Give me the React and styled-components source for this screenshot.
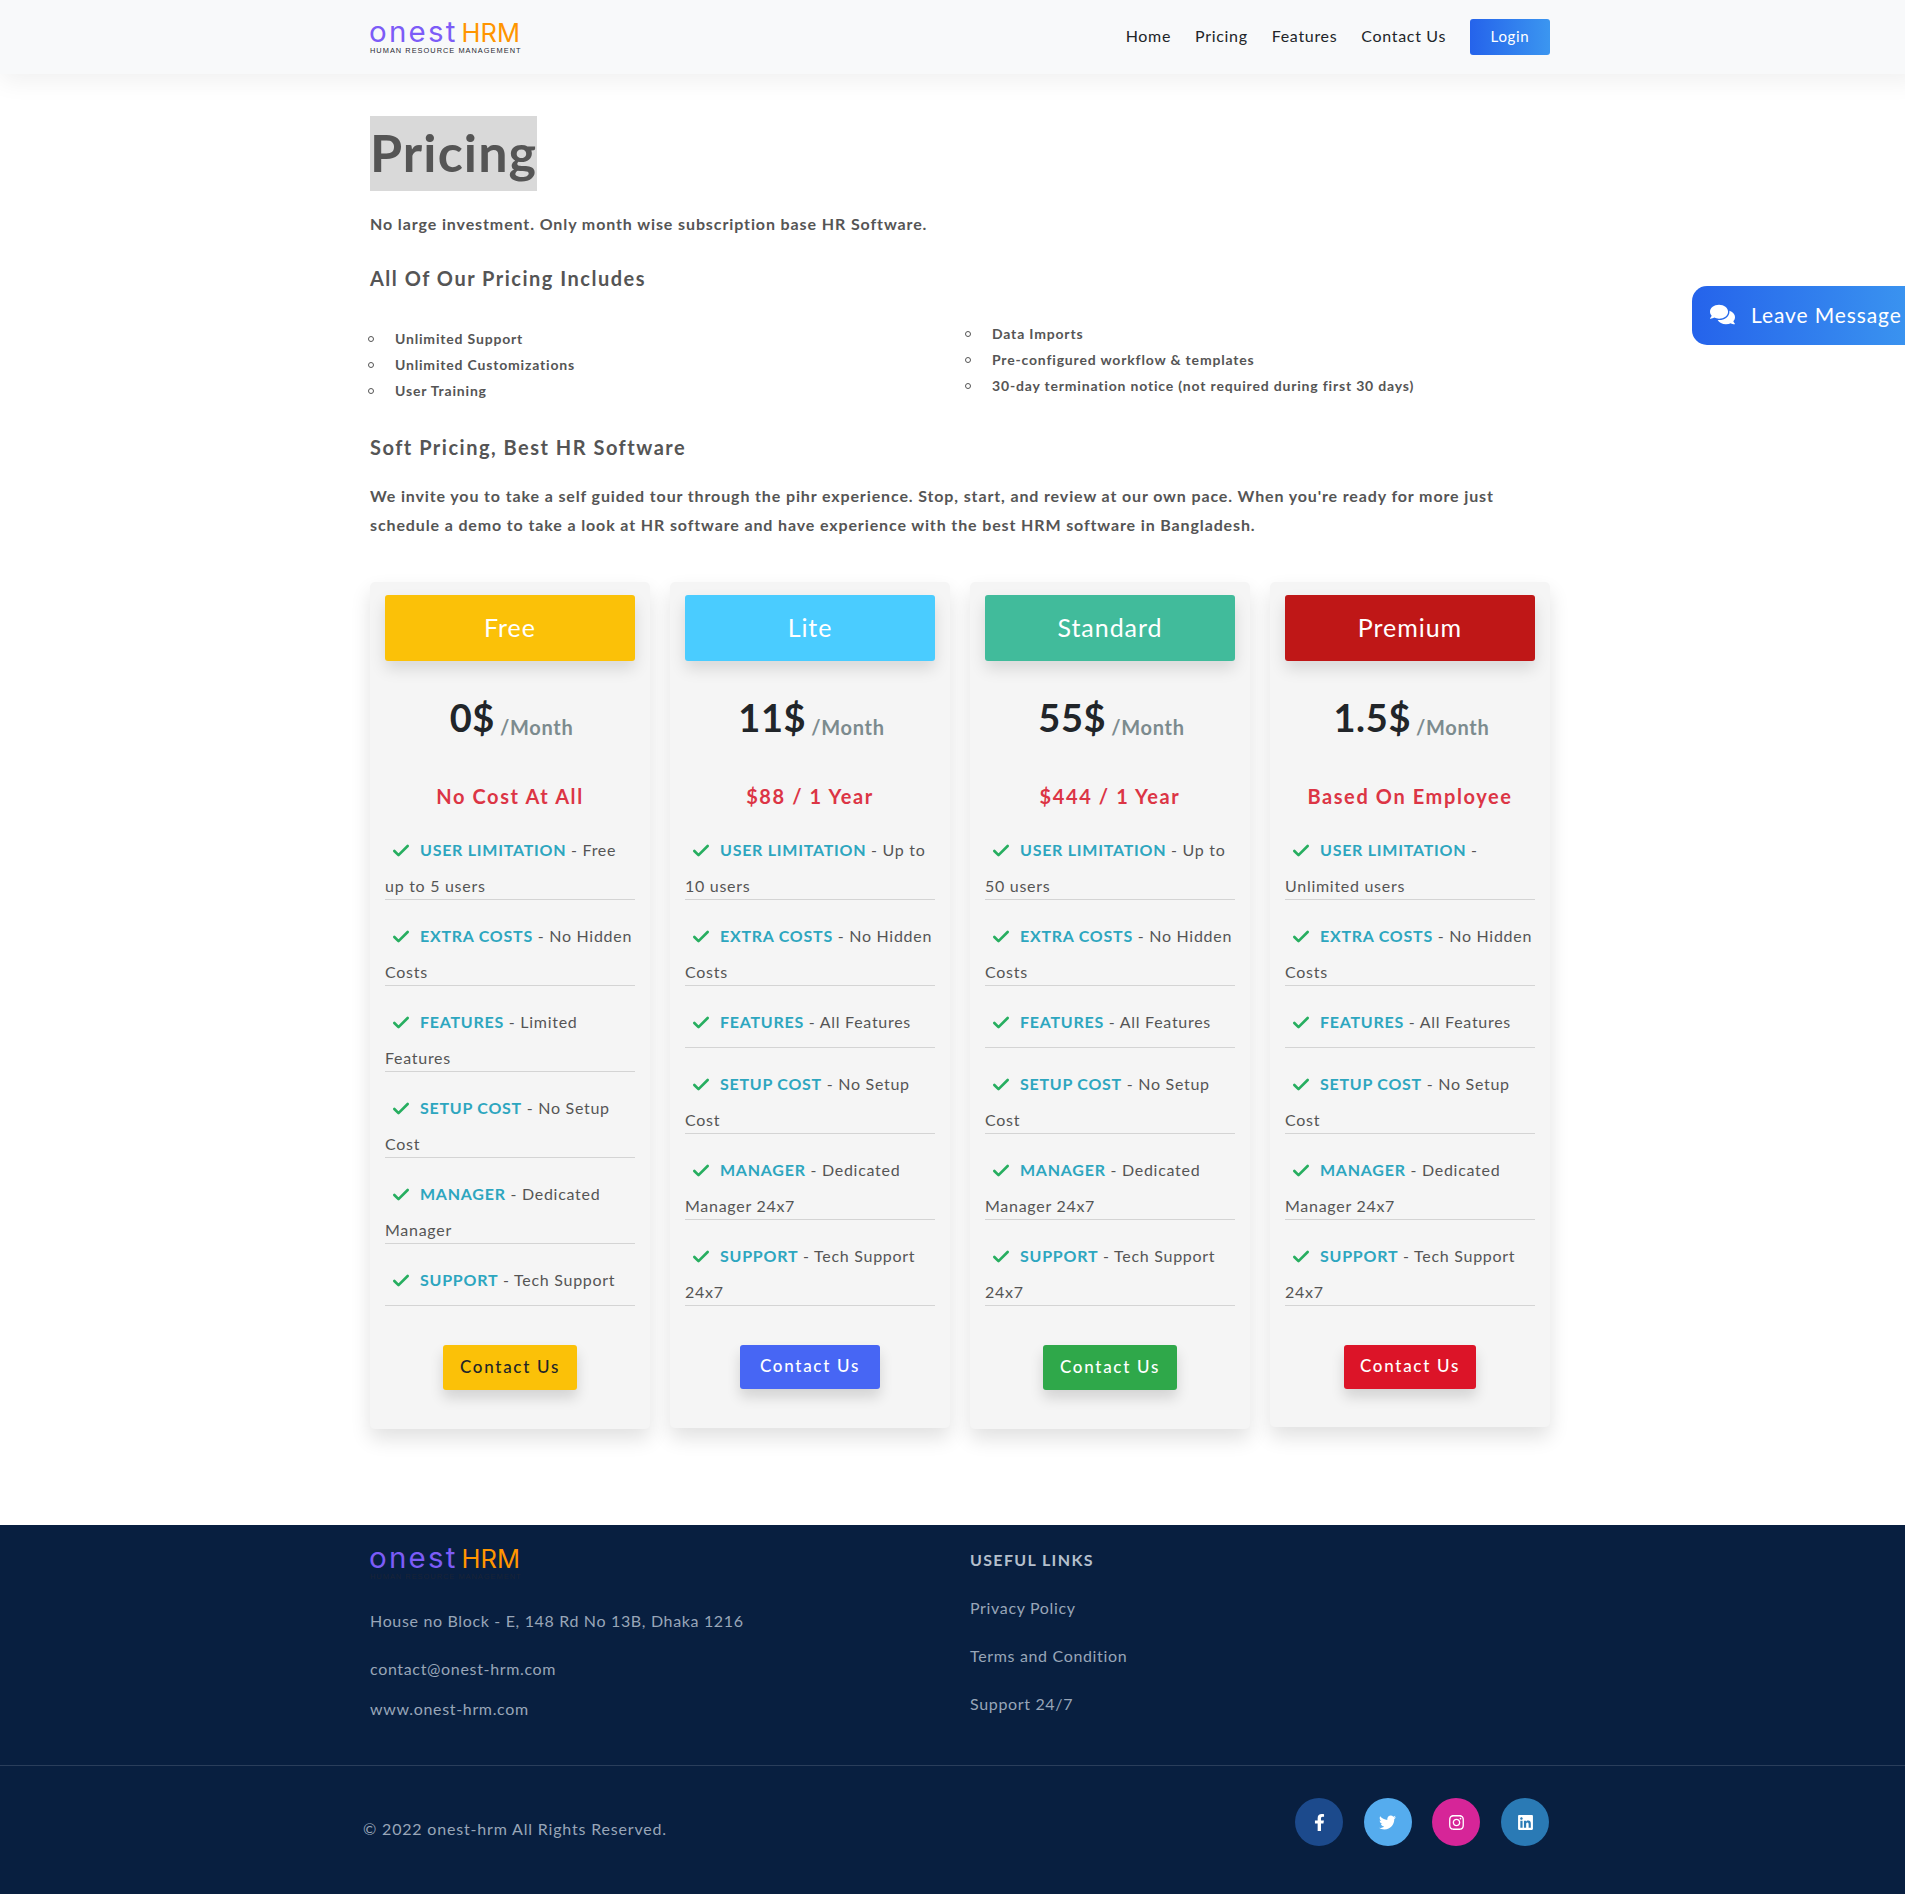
import React from "react";
import styled, { createGlobalStyle } from "styled-components";
import { FaComments, FaFacebookF, FaTwitter, FaInstagram, FaLinkedin } from "react-icons/fa";
import { Check } from "lucide-react";

const Global = createGlobalStyle`
  html, body { margin: 0; padding: 0; overflow-x: hidden; background: #fff; }
  body { font-family: "Lato", "Noto Sans", sans-serif; color: #555; }
  #root { width: 1920px; position: relative; }
  * { box-sizing: border-box; }
`;

const Header = styled.header`
  height: 74px; background: #f8f9fa; box-shadow: 0 8px 24px rgba(0,0,0,.06);
`;
const Container = styled.div`
  width: 1180px; margin: 0 auto;
`;
const HeaderRow = styled(Container)`
  height: 74px; display: flex; align-items: flex-start; justify-content: space-between;
`;
const LogoBox = styled.div`
  width: 152px; margin-top: ${p => p.$top}px; display: flex; flex-direction: column;
`;
const LogoWord = styled.div`
  font-family: "Inter", sans-serif; line-height: 26px; height: 26px; font-weight: 400;
  white-space: nowrap; display: flex; align-items: baseline;
`;
const LogoOnest = styled.span` color: #7c5cf7; font-size: 29.5px; letter-spacing: 2.2px; margin-left: -1px; `;
const LogoHrm = styled.span` color: #ff9500; font-size: 25.5px; margin-left: 4px; letter-spacing: 0; `;
const LogoTag = styled.div`
  font-family: "Liberation Sans", sans-serif; font-size: 7.4px; line-height: 9px; letter-spacing: 1.02px; margin-top: 2px; white-space: nowrap;
  color: ${p => p.$color};
`;
const Nav = styled.nav`
  display: flex; align-items: center; margin-top: 19px; height: 36px;
`;
const NavLink = styled.a`
  font-size: 16px; font-weight: 400; color: #212529; margin-right: 24px; letter-spacing: .68px; line-height: 34px; height: 36px;
`;
const LoginBtn = styled.a`
  width: 80px; height: 36px; border-radius: 3px; background: linear-gradient(90deg,#2563eb,#3b96f0);
  color: #fff; font-size: 15px; text-align: center; line-height: 35px; letter-spacing: .7px;
`;
const Main = styled(Container)`
  padding: 42px 0 96px;
`;
const Title = styled.h1`
  display: inline-block; margin: 0; height: 75px; background: #d9d9d9; color: #555;
  font-size: 52px; line-height: 72px; font-weight: 700; letter-spacing: 1.1px; vertical-align: top;
`;
const Lead = styled.p`
  margin: ${p => p.$top}px 0 0; font-size: 16px; font-weight: 700; line-height: ${p => p.$lh}px; letter-spacing: ${p => p.$ls}px; color: #555;
`;
const SubHead = styled.h2`
  margin: ${p => p.$top}px 0 0; font-size: 20px; font-weight: 700; line-height: 28px; letter-spacing: 1.5px; color: #555;
`;
const Lists = styled.div`
  display: grid; grid-template-columns: 597px 1fr; margin-left: -2px; align-items: start;
`;
const IncludeList = styled.ul`
  list-style: none; margin: ${p => p.$top}px 0 0; padding: 0;
`;
const IncludeItem = styled.li`
  display: flex; align-items: center; gap: 21px; height: 26px; font-size: 14px; font-weight: 700; letter-spacing: .82px; color: #555;
`;
const Marker = styled.span`
  width: 6px; height: 6px; margin-top: 1px; border-radius: 50%; border: 1px solid #555; flex: none;
`;
const Cards = styled.div`
  display: grid; grid-template-columns: repeat(4, 280px); gap: 20px; margin-top: 43px; align-items: start;
`;
const Card = styled.article`
  background: #f5f5f5; border-radius: 5px; padding: 13px 15px ${p => p.$pb}px;
  box-shadow: 0 10px 20px rgba(0,0,0,.12); display: flex; flex-direction: column;
`;
const CardTitle = styled.div`
  height: 66px; border-radius: 3px; background: ${p => p.$bg}; color: #fff; text-align: center;
  font-size: 25px; line-height: 64px; letter-spacing: .95px; box-shadow: 0 8px 16px rgba(0,0,0,.12);
`;
const Price = styled.div`
  margin-top: 34px; padding-left: 3px; text-align: center; line-height: 44px; height: 44px; white-space: nowrap;
`;
const Amount = styled.span`
  font-size: 38px; font-weight: 700; color: #212529; letter-spacing: .6px;
`;
const Per = styled.span`
  font-size: 20px; font-weight: 700; color: #7c8b8e; margin-left: 5px; letter-spacing: .7px; position: relative; top: 3px;
`;
const Plan = styled.div`
  margin-top: 43px; text-align: center; font-size: 20px; font-weight: 700; line-height: 28px; letter-spacing: 1.6px; color: #dc3545;
`;
const Features = styled.ul`
  list-style: none; margin: 28px 0 0; padding: 0;
`;
const Feature = styled.li`
  border-bottom: 1px solid #d4d4d4; padding-bottom: 1px; margin-bottom: 24px; font-size: 16px; line-height: 24px; letter-spacing: .72px; color: #555;
  &:last-child { margin-bottom: 0; }
`;
const Tick = styled.span`
  display: inline-block; height: 36px; width: 35px; padding: 3px 0 0 6px; vertical-align: top; color: #27ae60;
  & svg { display: block; }
`;
const Label = styled.b`
  font-weight: 700; color: #2da6bf; letter-spacing: .75px;
`;
const ContactBtn = styled.a`
  align-self: center; margin-top: 39px; width: ${p => p.$w}px; height: ${p => p.$h}px; line-height: ${p => p.$h - 2}px; border-radius: 3px;
  background: ${p => p.$bg}; color: ${p => p.$fg}; text-align: center; font-size: 17px; font-weight: 500; letter-spacing: 1.7px;
  box-shadow: 0 8px 14px rgba(0,0,0,.14);
`;
const Floating = styled.a`
  position: absolute; left: 1692px; top: 286px; width: 228px; height: 59px; border-radius: 15px 0 0 15px;
  background: linear-gradient(90deg,#2563eb,#3b96f0); color: #fff; display: flex; align-items: center;
  padding: 0 0 2px 18px; gap: 16px; font-size: 21px; letter-spacing: .9px; white-space: nowrap;
`;
const Footer = styled.footer`
  background: #081f40; height: 369px; color: #98a6b8;
`;
const FooterTop = styled(Container)`
  display: grid; grid-template-columns: 600px 1fr; height: 240px;
`;
const FootCol = styled.div` display: flex; flex-direction: column; align-items: flex-start; `;
const FootText = styled.div`
  margin-top: ${p => p.$top}px; font-size: 16px; line-height: 24px; letter-spacing: .66px; color: #98a6b8;
`;
const FootHead = styled.h3`
  margin: 23px 0 0; font-size: 16px; line-height: 24px; font-weight: 700; letter-spacing: 1.35px; text-transform: uppercase; color: #b4bfcc;
`;
const FooterBar = styled.div`
  height: 129px; border-top: 1px solid rgba(255,255,255,.14);
`;
const BarRow = styled(Container)`
  display: flex; justify-content: space-between; align-items: flex-start;
`;
const Copy = styled.div`
  margin: 51px 0 0 -7px; font-size: 16px; line-height: 24px; letter-spacing: .82px; color: #98a6b8;
`;
const Socials = styled.div`
  display: flex; gap: 20.67px; margin: 32px 1px 0 0;
`;
const Social = styled.a`
  width: 48px; height: 48px; border-radius: 50%; background: ${p => p.$bg}; color: #fff; display: flex; align-items: center; justify-content: center; font-size: 17px;
`;

const plans = [
  { name: "Free", bg: "#fbc108", price: "0$", plan: "No Cost At All", btn: "#fbc108", fg: "#212529", w: 134, h: 45, pb: 39,
    items: [["USER LIMITATION","Free up to 5 users"],["EXTRA COSTS","No Hidden Costs"],["FEATURES","Limited Features"],["SETUP COST","No Setup Cost"],["MANAGER","Dedicated Manager"],["SUPPORT","Tech Support"]] },
  { name: "Lite", bg: "#4accff", price: "11$", plan: "$88 / 1 Year", btn: "#4766f4", fg: "#fff", w: 140, h: 44, pb: 39,
    items: [["USER LIMITATION","Up to 10 users"],["EXTRA COSTS","No Hidden Costs"],["FEATURES","All Features"],["SETUP COST","No Setup Cost"],["MANAGER","Dedicated Manager 24x7"],["SUPPORT","Tech Support 24x7"]] },
  { name: "Standard", bg: "#41bb9b", price: "55$", plan: "$444 / 1 Year", btn: "#2fa84a", fg: "#fff", w: 134, h: 45, pb: 39,
    items: [["USER LIMITATION","Up to 50 users"],["EXTRA COSTS","No Hidden Costs"],["FEATURES","All Features"],["SETUP COST","No Setup Cost"],["MANAGER","Dedicated Manager 24x7"],["SUPPORT","Tech Support 24x7"]] },
  { name: "Premium", bg: "#bf1717", price: "1.5$", plan: "Based On Employee", btn: "#dc1428", fg: "#fff", w: 132, h: 44, pb: 38,
    items: [["USER LIMITATION","Unlimited users"],["EXTRA COSTS","No Hidden Costs"],["FEATURES","All Features"],["SETUP COST","No Setup Cost"],["MANAGER","Dedicated Manager 24x7"],["SUPPORT","Tech Support 24x7"]] },
];

const Logo = ({ top, tag }) => (
  <LogoBox $top={top}>
    <LogoWord><LogoOnest>onest</LogoOnest><LogoHrm>HRM</LogoHrm></LogoWord>
    <LogoTag $color={tag}>HUMAN RESOURCE MANAGEMENT</LogoTag>
  </LogoBox>
);

export default function App() {
  return (
    <>
      <Global />
      <Header>
        <HeaderRow>
          <Logo top={18} tag="#2a2a33" />
          <Nav>
            <NavLink>Home</NavLink>
            <NavLink>Pricing</NavLink>
            <NavLink>Features</NavLink>
            <NavLink>Contact Us</NavLink>
            <LoginBtn>Login</LoginBtn>
          </Nav>
        </HeaderRow>
      </Header>
      <Floating><FaComments size={25} />Leave Message</Floating>
      <Main>
        <Title>Pricing</Title>
        <Lead $top={21} $lh={24} $ls={0.89}>No large investment. Only month wise subscription base HR Software.</Lead>
        <SubHead $top={28}>All Of Our Pricing Includes</SubHead>
        <Lists>
          <IncludeList $top={33}>
            {["Unlimited Support","Unlimited Customizations","User Training"].map(t => <IncludeItem key={t}><Marker />{t}</IncludeItem>)}
          </IncludeList>
          <IncludeList $top={28}>
            {["Data Imports","Pre-configured workflow & templates","30-day termination notice (not required during first 30 days)"].map(t => <IncludeItem key={t}><Marker />{t}</IncludeItem>)}
          </IncludeList>
        </Lists>
        <SubHead $top={30}>Soft Pricing, Best HR Software</SubHead>
        <Lead $top={20} $lh={29} $ls={0.87}>We invite you to take a self guided tour through the pihr experience. Stop, start, and review at our own pace. When you're ready for more just schedule a demo to take a look at HR software and have experience with the best HRM software in Bangladesh.</Lead>
        <Cards>
          {plans.map(p => (
            <Card key={p.name} $pb={p.pb}>
              <CardTitle $bg={p.bg}>{p.name}</CardTitle>
              <Price><Amount>{p.price}</Amount><Per>/Month</Per></Price>
              <Plan>{p.plan}</Plan>
              <Features>
                {p.items.map(([l, v]) => (
                  <Feature key={l}><Tick><Check size={20} strokeWidth={3.2} /></Tick><Label>{l}</Label> - {v}</Feature>
                ))}
              </Features>
              <ContactBtn $bg={p.btn} $fg={p.fg} $w={p.w} $h={p.h}>Contact Us</ContactBtn>
            </Card>
          ))}
        </Cards>
      </Main>
      <Footer>
        <FooterTop>
          <FootCol>
            <Logo top={19} tag="#1a2336" />
            <FootText $top={28}>House no Block - E, 148 Rd No 13B, Dhaka 1216</FootText>
            <FootText $top={24}>contact@onest-hrm.com</FootText>
            <FootText $top={16}>www.onest-hrm.com</FootText>
          </FootCol>
          <FootCol>
            <FootHead>Useful Links</FootHead>
            <FootText $top={24}>Privacy Policy</FootText>
            <FootText $top={24}>Terms and Condition</FootText>
            <FootText $top={24}>Support 24/7</FootText>
          </FootCol>
        </FooterTop>
        <FooterBar>
          <BarRow>
            <Copy>© 2022 onest-hrm All Rights Reserved.</Copy>
            <Socials>
              <Social $bg="#1c4a8c"><FaFacebookF /></Social>
              <Social $bg="#55acee"><FaTwitter /></Social>
              <Social $bg="#d62598"><FaInstagram /></Social>
              <Social $bg="#2a7ab5"><FaLinkedin /></Social>
            </Socials>
          </BarRow>
        </FooterBar>
      </Footer>
    </>
  );
}
